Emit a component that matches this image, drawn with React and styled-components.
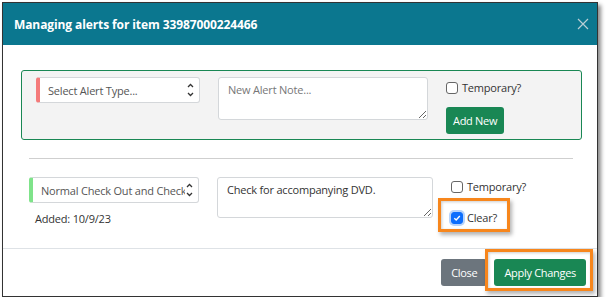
import React from "react";
import styled, { createGlobalStyle } from "styled-components";

const GlobalStyle = createGlobalStyle`
  body {
    margin: 0;
    background: #ffffff;
    font-family: "Open Sans", "Noto Sans", sans-serif;
  }
`;

const Frame = styled.div`
  box-sizing: border-box;
  margin: 2px 0 0 2px;
  width: 596px;
  height: 295px;
  border: 1px solid #333;
  background: #fff;
  box-shadow: 3px 3px 4px rgba(0, 0, 0, 0.45);
  display: flex;
  flex-direction: column;
`;

const Header = styled.div`
  height: 42px;
  background: #0b778f;
  display: flex;
  align-items: center;
  justify-content: space-between;
  padding: 0 8px 0 11px;
`;

const Title = styled.h5`
  margin: 0;
  color: #fff;
  font-size: 12px;
  font-weight: 700;
  letter-spacing: -0.1px;
`;

const CloseX = styled.button`
  border: 0;
  background: none;
  padding: 0;
  width: 12px;
  height: 12px;
  display: flex;
`;

const Body = styled.div`
  flex: 1;
  padding: 25px 24px 0 18px;
`;

const AddBox = styled.div`
  box-sizing: border-box;
  width: 561px;
  height: 70px;
  border: 1px solid #198754;
  border-radius: 3px;
  background: #f3f3f3;
  padding: 6px 14px;
  display: flex;
  align-items: flex-start;
  gap: 18px;
`;

const Rule = styled.hr`
  margin: 18px 0 0 8px;
  width: 544px;
  border: 0;
  border-top: 1px solid #cfcfcf;
`;

const AlertRow = styled.div`
  margin: 18px 0 0 8px;
  display: flex;
  align-items: flex-start;
  gap: 18px;
`;

const Column = styled.div`
  display: flex;
  flex-direction: column;
  align-items: flex-start;
`;

const Select = styled.div`
  box-sizing: border-box;
  width: ${(p) => p.$width}px;
  height: 26px;
  background: #fff;
  border: 1px solid #d4d7da;
  border-left: 4px solid ${(p) => p.$accent};
  border-radius: 3px;
  display: flex;
  align-items: center;
  padding: 0 4px 0 8px;
  font-size: 11px;
  letter-spacing: -0.2px;
  color: #555;
`;

const SelectText = styled.span`
  flex: 1;
  overflow: hidden;
  white-space: nowrap;
`;

const Note = styled.textarea`
  box-sizing: border-box;
  width: ${(p) => p.$width}px;
  height: ${(p) => p.$height}px;
  border: 1px solid #d4d7da;
  border-radius: 3px;
  padding: 4px 9px;
  font-family: "Open Sans", "Noto Sans", sans-serif;
  font-size: 11px;
  letter-spacing: -0.2px;
  color: #333;
  background: #fff;
  margin: 0;
  &::placeholder {
    color: #777;
  }
`;

const Added = styled.div`
  margin: 8px 0 0 6px;
  font-size: 11px;
  letter-spacing: -0.2px;
  color: #333;
`;

const CheckLabel = styled.label`
  position: relative;
  display: flex;
  align-items: center;
  gap: 4px;
  font-size: 11px;
  letter-spacing: -0.2px;
  color: #333;
  margin-top: ${(p) => p.$top || 0}px;
`;

const Box = styled.span`
  box-sizing: border-box;
  width: 12px;
  height: 12px;
  border-radius: 3px;
  border: 1px solid ${(p) => (p.$checked ? "#0d6efd" : "#666")};
  background: ${(p) => (p.$checked ? "#0d6efd" : "#fff")};
  box-shadow: ${(p) => (p.$checked ? "0 0 0 2px #b7d3fb" : "none")};
  display: flex;
  align-items: center;
  justify-content: center;
`;

const Button = styled.button`
  border: 0;
  border-radius: 3px;
  height: 27px;
  padding: 0 ${(p) => p.$pad}px;
  margin-top: ${(p) => p.$top || 0}px;
  background: ${(p) => p.$bg};
  color: #fff;
  font-family: "Open Sans", "Noto Sans", sans-serif;
  font-size: 11px;
  letter-spacing: -0.3px;
`;

const Footer = styled.div`
  height: 47px;
  border-top: 1px solid #dee2e6;
  display: flex;
  justify-content: flex-end;
  align-items: center;
  gap: 7px;
  padding: 0 11px 0 0;
`;

const Highlight = styled.span`
  position: absolute;
  box-sizing: border-box;
  left: ${(p) => p.$l}px;
  top: ${(p) => p.$t}px;
  width: ${(p) => p.$w}px;
  height: ${(p) => p.$h}px;
  border: 3px solid #f7861c;
  box-shadow: 2px 3px 4px rgba(0, 0, 0, 0.3), inset 1px 1px 3px rgba(0, 0, 0, 0.2);
  pointer-events: none;
`;

const ButtonWrap = styled.div`
  position: relative;
  display: flex;
`;

function Chevrons() {
  return (
    <svg width="9" height="16" viewBox="0 0 9 16">
      <path d="M2 5 L4.5 2.5 L7 5" fill="none" stroke="#333" strokeWidth="1.3" />
      <path d="M2 11 L4.5 13.5 L7 11" fill="none" stroke="#333" strokeWidth="1.3" />
    </svg>
  );
}

function Check({ label, checked, top, children }) {
  return (
    <CheckLabel $top={top}>
      <Box $checked={checked}>
        {checked && (
          <svg width="8" height="8" viewBox="0 0 8 8">
            <path d="M1.3 4.2 L3.2 6 L6.8 2" fill="none" stroke="#fff" strokeWidth="1.4" />
          </svg>
        )}
      </Box>
      {label}
      {children}
    </CheckLabel>
  );
}

export default function App() {
  return (
    <>
      <GlobalStyle />
      <Frame>
        <Header>
          <Title>Managing alerts for item 33987000224466</Title>
          <CloseX aria-label="Close">
            <svg width="12" height="12" viewBox="0 0 12 12">
              <path d="M1 1 L11 11 M11 1 L1 11" stroke="#b9ced5" strokeWidth="1.2" />
            </svg>
          </CloseX>
        </Header>
        <Body>
          <AddBox>
            <Select $width={164} $accent="#f47a7a">
              <SelectText>Select Alert Type...</SelectText>
              <Chevrons />
            </Select>
            <Note $width={210} $height={43} placeholder="New Alert Note..." />
            <Column>
              <Check label="Temporary?" top={3} />
              <Button $bg="#198754" $pad={7} $top={12}>
                Add New
              </Button>
            </Column>
          </AddBox>
          <Rule />
          <AlertRow>
            <Column>
              <Select $width={170} $accent="#7fe38a">
                <SelectText>Normal Check Out and Check In</SelectText>
                <Chevrons />
              </Select>
              <Added>Added: 10/9/23</Added>
            </Column>
            <Note $width={216} $height={41} defaultValue="Check for accompanying DVD." />
            <Column>
              <Check label="Temporary?" top={2} />
              <Check label="Clear?" checked top={16}>
                <Highlight $l={-13} $t={-12} $w={72} $h={34} />
              </Check>
            </Column>
          </AlertRow>
        </Body>
        <Footer>
          <Button $bg="#6c757d" $pad={10}>Close</Button>
          <ButtonWrap>
            <Button $bg="#198754" $pad={10}>Apply Changes</Button>
            <Highlight $l={-9} $t={-10} $w={108} $h={42} />
          </ButtonWrap>
        </Footer>
      </Frame>
    </>
  );
}
